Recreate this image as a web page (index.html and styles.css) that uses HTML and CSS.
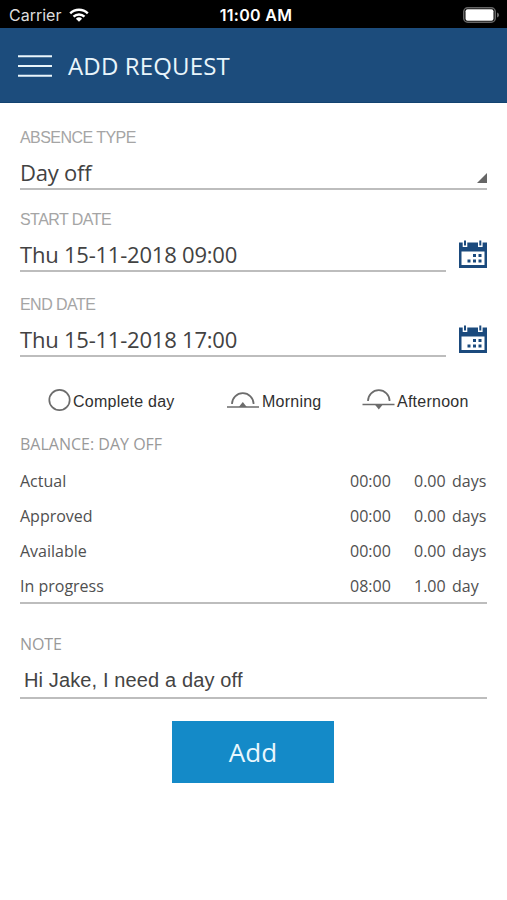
FILE: index.html
```html
<!DOCTYPE html>
<html lang="en">
<head>
<meta charset="utf-8">
<title>Add request</title>
<link rel="stylesheet" href="styles.css">
</head>
<body>
<div class="status">
  <div class="status-left"><span class="carrier">Carrier</span>
    <svg class="wifi" width="20" height="14" viewBox="0 0 20 14" fill="none" stroke="#fff" stroke-width="2.4"><path d="M1.2 5.3a12.6 12.6 0 0 1 17.6 0M4.5 8.7a7.9 7.9 0 0 1 11 0"/><path d="M6.9 10.7a4.5 4.5 0 0 1 6.2 0L10 13.8z" fill="#fff" stroke="none"/></svg>
  </div>
  <div class="clock">11:00 AM</div>
  <svg class="battery" width="37" height="16" viewBox="0 0 37 16"><rect x=".75" y=".75" width="31.5" height="14.5" rx="4" fill="none" stroke="#666" stroke-width="1.5"/><rect x="2.5" y="2.3" width="28" height="11.4" rx="2" fill="#fff"/><path d="M34 5.5c2.8.8 2.8 4.2 0 5z" fill="#666"/></svg>
</div>
<header class="bar">
  <svg class="menu" width="34" height="24" viewBox="0 0 34 24" stroke="#e9f5fb" stroke-width="2"><path d="M0 2.2h34M0 12h34M0 21.8h34"/></svg>
  <h1>ADD REQUEST</h1>
</header>
<main>
  <section class="field type">
    <div class="label absence">ABSENCE TYPE</div>
    <div class="value">Day off<svg class="corner" width="10" height="10" viewBox="0 0 10 10"><path d="M10 0v10H0z" fill="#666"/></svg></div>
  </section>
  <section class="field dated start">
    <div class="entry"><div class="label">START DATE</div><div class="value date">Thu 15-11-2018 09:00</div></div>
    <svg class="calendar" width="28" height="28" viewBox="0 0 28 28"><path fill="#1b4a7d" d="M0 2.5h28V28H0z"/><path fill="#fff" d="M2.500 11.500h23v13.500h-23zM3.700 0h4.600v7H3.700zM19 0h4.600v7H19z"/><path fill="#1b4a7d" d="M5 .5h2v5H5zM20.300 .5h2v5h-2zM14 14h3v3h-3zM19.500 14h3v3h-3zM8.500 19.500h3v3h-3zM14 19.500h3v3h-3zM19.500 19.500h3v3h-3z"/></svg>
  </section>
  <section class="field dated end">
    <div class="entry"><div class="label">END DATE</div><div class="value date">Thu 15-11-2018 17:00</div></div>
    <svg class="calendar" width="28" height="28" viewBox="0 0 28 28"><path fill="#1b4a7d" d="M0 2.5h28V28H0z"/><path fill="#fff" d="M2.500 11.500h23v13.500h-23zM3.700 0h4.600v7H3.700zM19 0h4.600v7H19z"/><path fill="#1b4a7d" d="M5 .5h2v5H5zM20.300 .5h2v5h-2zM14 14h3v3h-3zM19.500 14h3v3h-3zM8.500 19.500h3v3h-3zM14 19.500h3v3h-3zM19.500 19.500h3v3h-3z"/></svg>
  </section>
  <div class="options">
    <div class="option complete"><svg width="24" height="24" viewBox="0 0 24 24"><circle cx="11.500" cy="12" r="10.200" fill="none" stroke="#6c6c6c" stroke-width="1.700"/></svg><span>Complete day</span></div>
    <div class="option morning"><svg width="34" height="24" viewBox="0 0 34 24" fill="none" stroke="#6c6c6c" stroke-width="1.700"><path d="M1 19h32M6 16a10.800 10.800 0 0 1 21.600 0"/><path d="M12.800 19l4-5 4 5z" fill="#6c6c6c" stroke="none"/></svg><span>Morning</span></div>
    <div class="option afternoon"><svg width="34" height="24" viewBox="0 0 34 24" fill="none" stroke="#6c6c6c" stroke-width="1.700"><path d="M.5 16.500h32M6 13a10.800 10.800 0 0 1 21.600 0"/><path d="M12.800 16.500l4 5 4-5z" fill="#6c6c6c" stroke="none"/></svg><span>Afternoon</span></div>
  </div>
  <section class="balance">
    <h2>BALANCE: DAY OFF</h2>
    <div class="row"><span>Actual</span><span>00:00</span><span>0.00</span><span>days</span></div>
    <div class="row"><span>Approved</span><span>00:00</span><span>0.00</span><span>days</span></div>
    <div class="row"><span>Available</span><span>00:00</span><span>0.00</span><span>days</span></div>
    <div class="row"><span>In progress</span><span>08:00</span><span>1.00</span><span>day</span></div>
  </section>
  <section class="note">
    <h2>NOTE</h2>
    <div class="message">Hi Jake, I need a day off</div>
  </section>
  <button class="add" type="button">Add</button>
</main>
</body>
</html>
```
FILE: styles.css
```css
* { box-sizing: border-box; }
body { margin: 0; width: 507px; height: 900px; overflow: hidden; background: #fff; color: #424242; font-family: "Open Sans", sans-serif; }
svg { display: block; flex: none; }
.status { height: 28px; background: #000; color: #fff; display: grid; grid-template-columns: 1fr auto 1fr; align-items: center; padding: 2px 7px 0 9px; font: 16px/26px Inter, sans-serif; }
.status-left { display: flex; align-items: center; gap: 8px; }
.carrier { color: #ddd; letter-spacing: 0; }
.clock { font-weight: 600; font-size: 16px; letter-spacing: .3px; padding-left: 3px; }
.battery { justify-self: end; }
.bar { height: 75px; background: #1c4c7c; border-bottom: 1px solid #124370; display: flex; align-items: center; padding: 1px 18px 0; gap: 16px; }
h1 { margin: 0; color: #e9f5fb; font-size: 24px; font-weight: 400; line-height: 34px; letter-spacing: .15px; }
main { padding: 0 20px; display: flex; flex-direction: column; }
.field .label { font: 16px/20px "Liberation Sans", sans-serif; color: #a5a5a5; letter-spacing: -.55px; height: 20px; }
.value { height: 42px; border-bottom: 2px solid #bdbdbd; font-size: 22px; line-height: 30px; padding-top: 9px; display: flex; justify-content: space-between; letter-spacing: -.22px; }
.type { margin-top: 25px; }
.corner { margin-top: 16px; }
.dated { display: flex; justify-content: space-between; align-items: flex-end; }
.entry { width: 426px; }
.start { margin-top: 20px; }
.end { margin-top: 23px; }
.calendar { margin-bottom: 4px; }
.options { display: flex; margin-top: 31px; height: 24px; padding-left: 28px; font: 16px/24px "Liberation Sans", sans-serif; color: #303030; letter-spacing: .24px; }
.option { display: flex; align-items: center; }
.option span { padding-top: 3px; }
.complete { width: 178px; gap: 1px; }
.morning { width: 136px; gap: 2px; }
.afternoon { gap: 1px; }
h2 { margin: 0; color: #999; font-size: 16px; line-height: 24px; font-weight: 400; letter-spacing: 0; }
.balance { margin-top: 20px; border-bottom: 2px solid #bdbdbd; height: 172px; }
.balance h2 { margin-bottom: 8px; }
.row { height: 35px; line-height: 35px; font-size: 16px; display: grid; grid-template-columns: 330px 64px 38px 35px; color: #505050; white-space: nowrap; }
.note { margin-top: 28px; border-bottom: 2px solid #bdbdbd; height: 67px; }
.note h2 { letter-spacing: -.1px; }
.message { font: 20px/26px "Liberation Sans", sans-serif; padding: 0 4px; margin-top: 11px; color: #444; letter-spacing: .13px; }
.add { margin: 22px 0 0 152px; width: 162px; height: 62px; border: 0; padding: 0; background: #148ac8; color: #e9f7fd; font: 26px/60px "Open Sans", sans-serif; }
```
